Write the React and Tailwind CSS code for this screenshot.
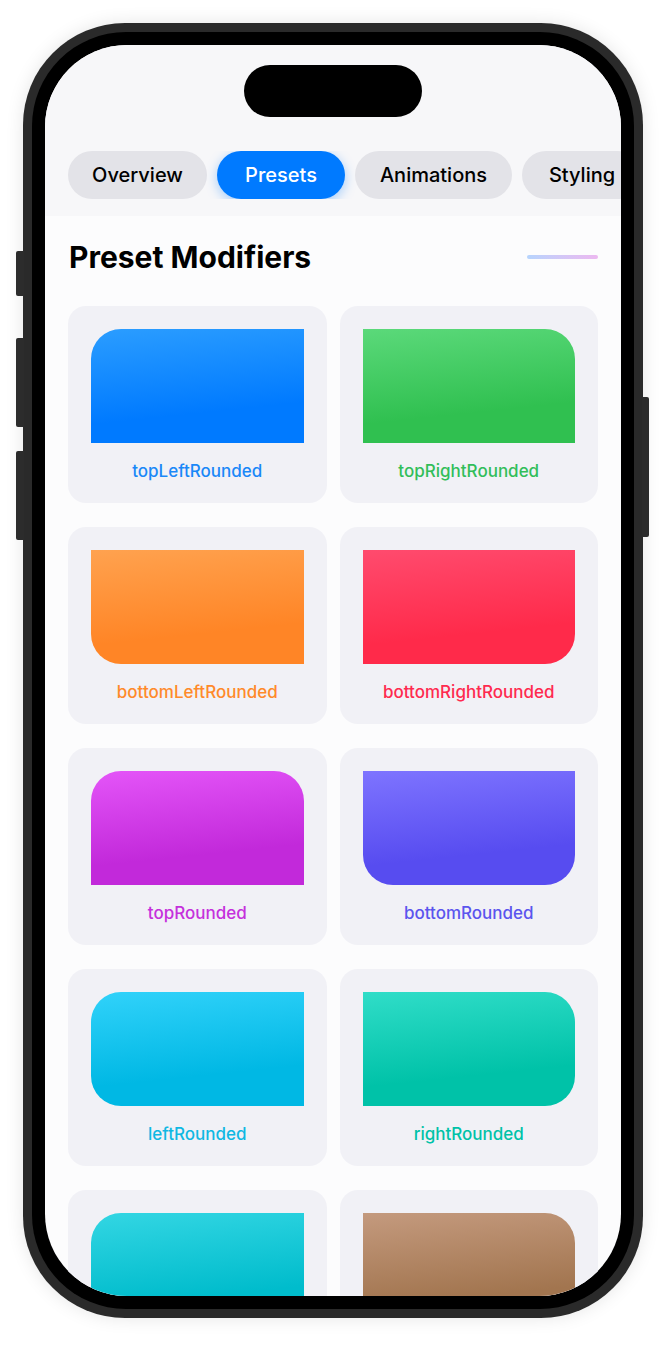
import React from "react";

const tabs = [
  { name: "Overview", width: "w-[139px]" },
  { name: "Presets", width: "w-[128px]", active: true },
  { name: "Animations", width: "w-[157px]" },
  { name: "Styling", width: "w-[120px]" },
];

const presets = [
  {
    id: "tl",
    label: "topLeftRounded",
    shape: "rounded-tl-[30px]",
    fill: "from-[#2b9dff] to-[#007aff]",
    text: "text-[#1a88f8]",
  },
  {
    id: "tr",
    label: "topRightRounded",
    shape: "rounded-tr-[30px]",
    fill: "from-[#5bd97a] to-[#30c050]",
    text: "text-[#32be5a]",
  },
  {
    id: "bl",
    label: "bottomLeftRounded",
    shape: "rounded-bl-[30px]",
    fill: "from-[#ffa24f] to-[#ff8526]",
    text: "text-[#ff8a2a]",
  },
  {
    id: "br",
    label: "bottomRightRounded",
    shape: "rounded-br-[30px]",
    fill: "from-[#ff4b6e] to-[#ff2a4a]",
    text: "text-[#ff2a4f]",
  },
  {
    id: "t",
    label: "topRounded",
    shape: "rounded-t-[30px]",
    fill: "from-[#e455f8] to-[#c229da]",
    text: "text-[#c530dc]",
  },
  {
    id: "b",
    label: "bottomRounded",
    shape: "rounded-b-[30px]",
    fill: "from-[#7e74ff] to-[#574cf0]",
    text: "text-[#5b55ee]",
  },
  {
    id: "l",
    label: "leftRounded",
    shape: "rounded-l-[30px]",
    fill: "from-[#31d2fa] to-[#00b8e4]",
    text: "text-[#0fb8e3]",
  },
  {
    id: "r",
    label: "rightRounded",
    shape: "rounded-r-[30px]",
    fill: "from-[#30ddc8] to-[#00c2a8]",
    text: "text-[#00c2a8]",
  },
  // last row sits under the screen edge, label never visible
  {
    id: "d1",
    label: "",
    shape: "rounded-tl-[30px] rounded-br-[30px]",
    fill: "from-[#33d6e3] to-[#00bccc]",
    text: "text-[#00bccc]",
  },
  {
    id: "d2",
    label: "",
    shape: "rounded-tr-[30px] rounded-bl-[30px]",
    fill: "from-[#c49a7e] to-[#a2754f]",
    text: "text-[#a2754f]",
  },
];

const PresetCard = ({ preset }) => (
  <div className="rounded-[18px] bg-[#f1f1f6] px-[23px] pt-[23px] pb-[22px]">
    <div
      className={`h-[114px] w-full bg-linear-[174deg] to-70% ${preset.fill} ${preset.shape}`}
    />
    <p
      className={`mt-[18px] h-[20px] text-center text-[17px] leading-[20px] font-medium ${preset.text}`}
    >
      {preset.label}
    </p>
  </div>
);

const App = () => {
  return (
    <div className="min-h-screen bg-white pt-[23px] pl-[23px] font-['Inter','Noto_Sans',sans-serif]">
      <div className="relative w-[620px] h-[1295px]">
        {/* side buttons */}
        <div className="absolute left-[-7px] top-[228px] h-[45px] w-[8px] rounded-l-[2px] bg-[#2c2c2c]" />
        <div className="absolute left-[-7px] top-[315px] h-[89px] w-[8px] rounded-l-[2px] bg-[#2c2c2c]" />
        <div className="absolute left-[-7px] top-[428px] h-[89px] w-[8px] rounded-l-[2px] bg-[#2c2c2c]" />
        <div className="absolute right-[-6px] top-[374px] h-[140px] w-[7px] rounded-r-[2px] bg-[#2c2c2c]" />

        <div className="h-full w-full rounded-[102px] bg-[#2a2a2a] p-[9px] shadow-[0_0_18px_rgba(0,0,0,0.1)]">
          <div className="h-full w-full rounded-[94px] bg-black p-[13px]">
            <div className="flex h-full w-full flex-col overflow-hidden rounded-[82px] bg-[#fcfcfd]">
              {/* top bar */}
              <div className="bg-[#f7f7f9] pt-[20px] pb-[17px]">
                <div className="mx-auto h-[52px] w-[178px] rounded-full bg-black" />
                <div className="mt-[34px] flex gap-[10px] overflow-hidden pl-[23px]">
                  {tabs.map((tab) => (
                    <div
                      key={tab.name}
                      className={`flex h-[48px] shrink-0 items-center justify-center rounded-full text-[20px] font-medium ${tab.width} ${
                        tab.active
                          ? "bg-[#007aff] text-white shadow-[0_3px_12px_rgba(0,122,255,0.35)]"
                          : "bg-[#e3e3e8] text-black"
                      }`}
                    >
                      {tab.name}
                    </div>
                  ))}
                </div>
              </div>

              {/* content */}
              <div className="px-[23px] pt-[23px]">
                <div className="flex items-center justify-between">
                  <h1 className="pl-px text-[30px] leading-[36px] font-bold text-black">
                    Preset Modifiers
                  </h1>
                  <div className="h-[4px] w-[71px] rounded-full bg-linear-to-r from-[#b6d4fd] to-[#ecb8f0]" />
                </div>

                <div className="mt-[31px] grid grid-cols-2 gap-x-[13px] gap-y-[24px]">
                  {presets.map((preset) => (
                    <PresetCard key={preset.id} preset={preset} />
                  ))}
                </div>
              </div>
            </div>
          </div>
        </div>
      </div>
    </div>
  );
};

export default App;
